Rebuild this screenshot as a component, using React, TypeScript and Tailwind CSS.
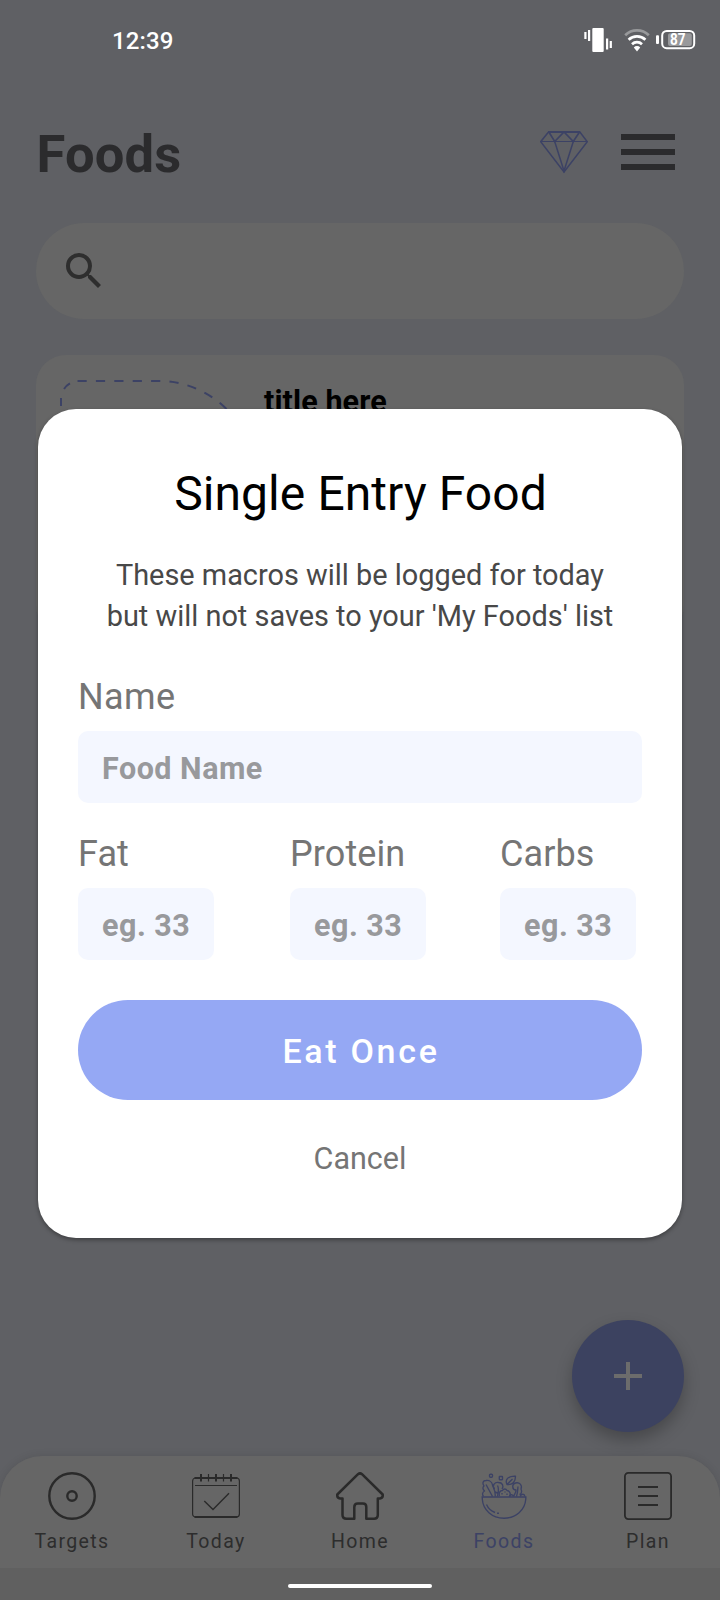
import React from "react";

function StatusBar() {
  return (
    <div className="flex h-20 items-start justify-between pl-[112px] pr-6 pt-[27px]">
      <span className="text-[24px] font-medium leading-7 tracking-[0.1px] text-white">12:39</span>
      <svg width="112" height="28" viewBox="584 26 112 28" className="-mt-px" fill="#fff">
        <rect x="592.3" y="28" width="11.4" height="24" rx="1" />
        <rect x="584.3" y="32" width="2.2" height="7" />
        <rect x="588" y="30" width="2.2" height="11" />
        <rect x="606" y="38.5" width="2.2" height="11" />
        <rect x="609.7" y="41" width="2.2" height="7" />
        <g fill="none" stroke="#fff" strokeWidth="2.7">
          <path d="M625.2 35.2a17 17 0 0 1 23.6 0" stroke="#98999b" />
          <path d="M628.6 39.8a12.2 12.2 0 0 1 16.8 0" />
          <path d="M632 44.2a7.3 7.3 0 0 1 10 0" />
        </g>
        <path d="M633.8 47.4a4.5 4.5 0 0 1 6.4 0l-3.2 4z" />
        <rect x="656" y="35.3" width="3" height="8.8" rx="1" />
        <rect x="662.2" y="31" width="32" height="17.2" rx="4.5" fill="none" stroke="#fff" strokeWidth="2" />
        <rect x="668" y="33.3" width="23.8" height="12.6" rx="2" fill="#98999b" />
        <text x="670" y="45.2" fontSize="16.5" fontWeight="700" textLength="15.5" lengthAdjust="spacingAndGlyphs">87</text>
      </svg>
    </div>
  );
}

function Header() {
  return (
    <header className="flex h-[143px] items-start justify-between pl-[36.5px] pr-[45px] pt-11">
      <h1 className="text-[52.5px] font-bold leading-[60px] tracking-[0.15px] text-[#2b2b2d]">Foods</h1>
      <div className="flex gap-[33px] pt-1.5">
        <svg width="48" height="44" viewBox="540 130 48 44" fill="none" stroke="#3c4265" strokeWidth="1.5">
          <path d="M548.7 131.8H579.7L587.3 141.7L564 172L540.7 141.7Z" />
          <path d="M540.7 141.5H587.3" strokeWidth="1.1" />
          <path d="M548.7 131.8L554.7 141.5L564 132L573.3 141.5L579.7 131.8" strokeWidth="1.7" />
          <path d="M554.7 141.5L564 171L573.3 141.5" />
          <path d="M548.5 132H580" strokeWidth="2" />
        </svg>
        <div className="flex flex-col gap-[9px] pt-1">
          <span className="h-1.5 w-[54px] bg-[#2b2b2d]" />
          <span className="h-1.5 w-[54px] bg-[#2b2b2d]" />
          <span className="h-1.5 w-[54px] bg-[#2b2b2d]" />
        </div>
      </div>
    </header>
  );
}

function SearchBar() {
  return (
    <div className="mx-9 flex h-24 items-center rounded-full bg-[#666] pl-6">
      <svg width="48" height="48" viewBox="0 0 24 24" fill="#2e2e2e">
        <path d="M15.5 14h-.79l-.28-.27A6.471 6.471 0 0 0 16 9.5 6.5 6.5 0 1 0 9.5 16c1.61 0 3.09-.59 4.23-1.57l.27.28v.79l5 4.99L20.49 19l-4.99-5zm-6 0C7.01 14 5 11.99 5 9.5S7.01 5 9.5 5 14 7.01 14 9.5 11.99 14 9.5 14z" />
      </svg>
    </div>
  );
}

function FoodCard() {
  return (
    <div className="mx-9 mt-9 flex h-[280px] items-start rounded-[30px] bg-[#666] pl-6 pt-6">
      <svg width="176" height="60" viewBox="60 379 176 60" fill="none" stroke="#3c4265" strokeWidth="2">
        <path d="M77.5 381H157A96 96 0 0 1 236 420" strokeDasharray="9.2 9.2" />
        <path d="M79 381A18 18 0 0 0 61 399V440" strokeDasharray="8 9.5" strokeDashoffset="8" />
      </svg>
      <span className="ml-7 mt-[5px] text-[30.5px] font-bold leading-9 tracking-[0.1px] text-black">title here</span>
    </div>
  );
}

function TargetIcon() {
  return (
    <svg width="48" height="48" viewBox="0 0 48 48" fill="none" stroke="#2a2a2a" strokeWidth="2.4">
      <circle cx="24" cy="24" r="22.7" />
      <circle cx="24" cy="24" r="4.7" />
    </svg>
  );
}

function TodayIcon() {
  return (
    <svg width="48" height="48" viewBox="0 0 48 48" fill="none" stroke="#2a2a2a" strokeWidth="1.2">
      <rect x="0.6" y="6" width="46.8" height="39" rx="3" />
      <path d="M3 13.5H45" />
      <path d="M2.5 6H45.5M2.5 45H45.5" strokeWidth="1.8" />
      <path d="M9 2V9.5M24 2V9.5M39 2V9.5" strokeWidth="2" />
      <path d="M16.5 2V9.5M31.5 2V9.5" />
      <path d="M12.3 29L21 37.5L37 21.3" strokeWidth="1.4" />
    </svg>
  );
}

function HomeIcon() {
  return (
    <svg width="48" height="48" viewBox="0 0 48 48" fill="none" stroke="#2a2a2a" strokeWidth="2.5" strokeLinejoin="round">
      <path d="M6.5 26.5H4Q.8 26 1.3 22.5L22 2.2Q24 .5 26 2.2L46.7 22.5Q47.2 26 44 26.5H41.8V43Q41.8 46.7 38 46.7H30.3V35Q30.3 31.5 27 31.5H21.8Q18.3 31.5 18.3 35V46.7H10.5Q6.5 46.7 6.5 43Z" />
    </svg>
  );
}

function BowlIcon() {
  return (
    <svg width="48" height="48" viewBox="0 0 48 48" fill="none" stroke="#3c4265" strokeWidth="1.35" strokeLinejoin="round">
      <path d="M1.5 25H46.5M2.3 25V27C3 38 12 46.2 24 46.2S45 38 45.8 27V25" />
      <path d="M6.5 32.5C8 36 11 39 15 40.5M17 41.2H19" />
      <rect x="9.5" y="2.2" width="3" height="3" rx="1" />
      <rect x="19.3" y="4.5" width="3.2" height="3.2" rx=".4" />
      <path d="M27 12.5C24.5 7 28.5 4 35.5 4.2C35.5 10 32.5 13 27 12.5ZM27 12.5L32.5 7" />
      <path d="M3.5 24.5C1.8 22.5 2.5 20 4.5 19C2.5 17 2.5 15 4 14C2 11.5 2.8 8.5 6 8.5C9.5 8 12 10 12.5 13C13.5 16 15.5 18 15.3 24.5" />
      <path d="M6 12.5L12.5 24.5" />
      <path d="M14.5 17C11.5 13 15 10 18.5 10.5C22.5 10.5 24 14 22 17" />
      <path d="M17.5 13.5C19.5 17 18 21 17.5 24.5M15 20L17.5 21" />
      <path d="M19.5 24C18.5 21 20 18.5 22.5 18.5C23.5 16.5 26 16.5 27 18.5C30 19 31 22 29.5 24.5M22 22.5V21M25 20.5V19.5M27 23V21.5" />
      <path d="M33.5 24.5C34.5 22 36 21 36 18C32 18 31.5 12 35.5 11C39.5 10 42.5 13 41 17C42.5 20 41 22 39.5 22.5M38 14.5C37.5 18 38 20 36.5 24.5M40 24.5C41.5 21.5 44.5 21.5 45 24.5" />
      <path d="M29.5 24.5C30 22.5 32 22 33.5 24" />
    </svg>
  );
}

function PlanIcon() {
  return (
    <svg width="48" height="48" viewBox="0 0 48 48" fill="none" stroke="#2a2a2a" strokeWidth="1.8">
      <rect x="0.9" y="0.9" width="46.2" height="46.2" rx="3.5" />
      <path d="M14 15H34M14 24H34M14 33H34" />
    </svg>
  );
}

const tabs = [
  { label: "Targets", Icon: TargetIcon, color: "text-[#2d2d2d]" },
  { label: "Today", Icon: TodayIcon, color: "text-[#2d2d2d]" },
  { label: "Home", Icon: HomeIcon, color: "text-[#2d2d2d]" },
  { label: "Foods", Icon: BowlIcon, color: "text-[#3c4265]" },
  { label: "Plan", Icon: PlanIcon, color: "text-[#2d2d2d]" },
];

function BottomNav() {
  return (
    <footer>
      <nav className="grid h-28 grid-cols-5 rounded-t-[42px] bg-[#666] shadow-[0_0_8px_rgba(0,0,0,0.1)]">
        {tabs.map(({ label, Icon, color }) => (
          <div key={label} className="flex flex-col items-center pt-4">
            <Icon />
            <span className={`mt-2.5 text-[19.5px] leading-6 tracking-[1.4px] ${color}`}>{label}</span>
          </div>
        ))}
      </nav>
      <div className="flex h-8 justify-center bg-[#606060] pt-4">
        <div className="h-1 w-36 rounded-full bg-white" />
      </div>
    </footer>
  );
}

function MacroField({ label }: { label: string }) {
  return (
    <div>
      <div className="text-[36px] leading-[42px] tracking-[0.1px] text-[#757575]">{label}</div>
      <div className="mt-[13px] flex h-[72px] w-[136px] items-center whitespace-nowrap rounded-[10px] bg-[#f4f7ff] pl-6 pt-1 text-[30.5px] font-bold tracking-[0.5px] text-[#98999c]">
        eg. 33
      </div>
    </div>
  );
}

function EntryDialog() {
  return (
    <div className="absolute left-[38px] top-[409px] h-[829px] w-[644px] rounded-[38px] bg-white px-10 pt-[57px] shadow-[0_2px_4px_rgba(0,0,0,0.35)]">
      <h2 className="pl-px text-center text-[48px] leading-[56px] tracking-[0.08px] text-black">Single Entry Food</h2>
      <p className="mt-[33px] whitespace-nowrap text-center text-[28.9px] leading-[41px] text-[#484848]">
        These macros will be logged for today
        <br />
        but will not saves to your 'My Foods' list
      </p>
      <div className="mt-[39px] text-[36px] leading-[42px] tracking-[0.4px] text-[#757575]">Name</div>
      <div className="mt-[13px] flex h-[72px] items-center rounded-[10px] bg-[#f4f7ff] pl-6 pt-1 text-[30.5px] font-bold tracking-[0.5px] text-[#98999c]">
        Food Name
      </div>
      <div className="mt-[30px] grid grid-cols-[212px_210px_136px]">
        <MacroField label="Fat" />
        <MacroField label="Protein" />
        <MacroField label="Carbs" />
      </div>
      <button className="mt-10 flex h-[100px] w-full items-center justify-center rounded-full bg-[#95a8f4] pl-[2px] pt-0.5 text-[34px] font-medium tracking-[2.7px] text-white">
        Eat Once
      </button>
      <div className="mt-[41px] text-center text-[30.5px] leading-9 text-[#757575]">Cancel</div>
    </div>
  );
}

export default function App() {
  return (
    <div className="relative flex h-[1600px] w-[720px] flex-col overflow-hidden bg-[#5f6064] font-['Roboto',sans-serif]">
      <StatusBar />
      <Header />
      <SearchBar />
      <FoodCard />
      <div className="flex-1" />
      <div className="mb-6 mr-9 flex size-28 items-center justify-center self-end rounded-full bg-[#3c4260] shadow-[0_8px_16px_rgba(0,0,0,0.25)]">
        <svg width="28" height="28" viewBox="0 0 28 28" stroke="#6c6c6c" strokeWidth="4">
          <path d="M14 0V28M0 14H28" />
        </svg>
      </div>
      <BottomNav />
      <EntryDialog />
    </div>
  );
}
